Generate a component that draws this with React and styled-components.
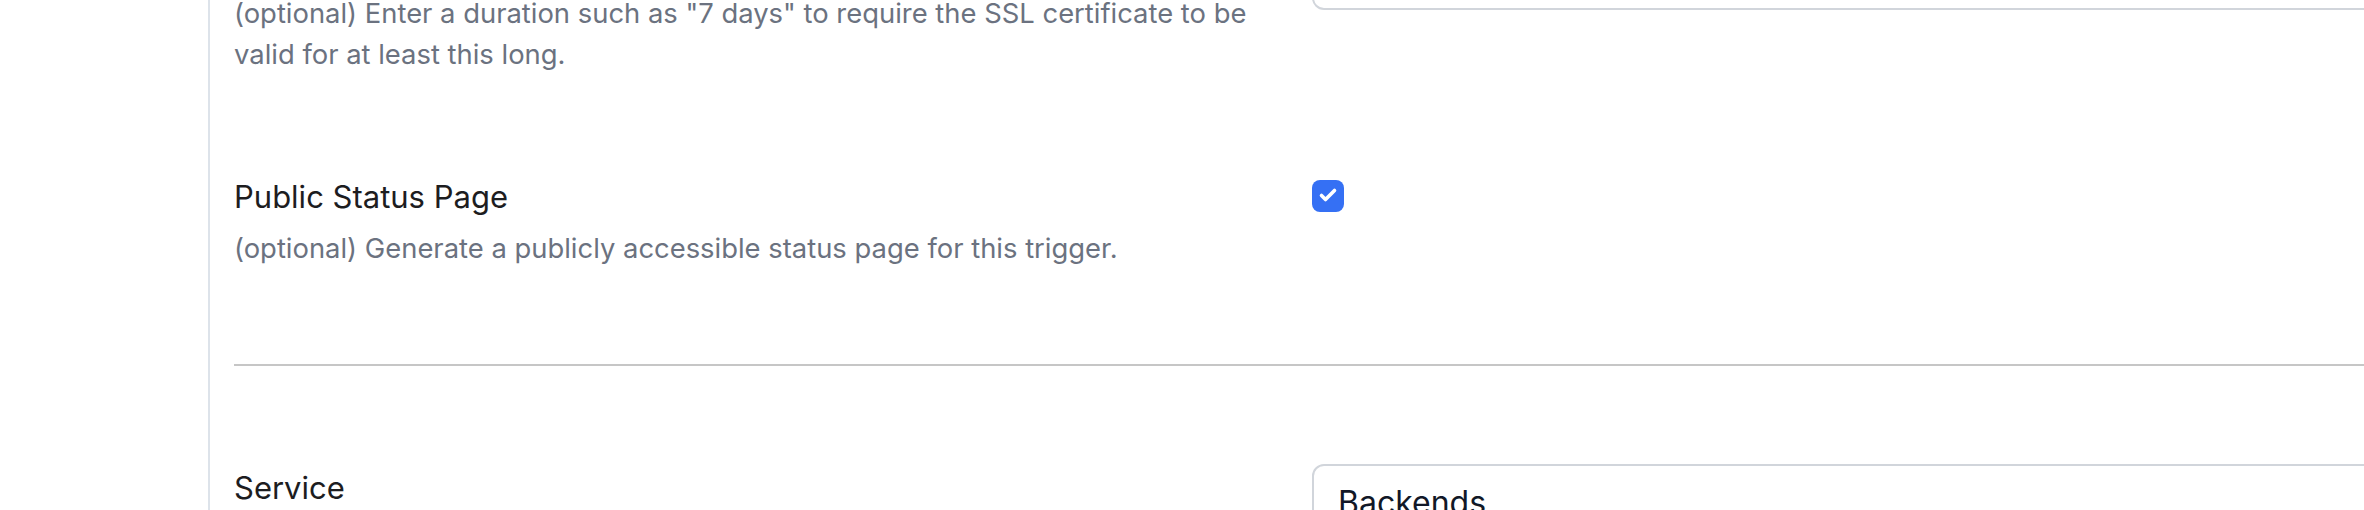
import styled, { createGlobalStyle } from "styled-components";

const GlobalStyle = createGlobalStyle`
  html, body {
    margin: 0;
    padding: 0;
    background: #ffffff;
    overflow: hidden;
  }
  body {
    font-family: Inter, "Helvetica Neue", Arial, sans-serif;
    -webkit-font-smoothing: antialiased;
  }
`;

const Layout = styled.div`
  display: flex;
  min-height: 510px;
`;

const Sidebar = styled.aside`
  flex: 0 0 208px;
  border-right: 2px solid #dde3ea;
`;

const Main = styled.main`
  flex: 0 0 2400px;
  padding-left: 24px;
  margin-top: -68px;
`;

const Row = styled.div`
  display: grid;
  grid-template-columns: 1030px 1100px;
  column-gap: 48px;
  align-items: start;
  margin-bottom: ${(p) => p.$spaceAfter || 0}px;
`;

const LabelCol = styled.div`
  display: flex;
  flex-direction: column;
  padding-top: ${(p) => p.$offset || 0}px;
`;

const Label = styled.label`
  font-size: 31px;
  line-height: 40px;
  font-weight: 400;
  color: #1d1d1f;
`;

const Help = styled.p`
  margin: ${(p) => p.$gap || 11}px 0 0;
  font-size: 27.4px;
  line-height: 41px;
  color: #6b7280;
`;

const Input = styled.div`
  box-sizing: border-box;
  width: 100%;
  border: 2px solid #d1d5db;
  border-radius: 12px;
  padding: 13px 24px;
  font-size: 32px;
  line-height: 48px;
  color: #111827;
  min-height: 78px;
`;

const CheckWrap = styled.div`
  padding-top: 3px;
`;

const Checkbox = styled.span`
  display: flex;
  align-items: center;
  justify-content: center;
  width: 32px;
  height: 32px;
  border-radius: 8px;
  background: ${(p) => (p.$checked ? "#3570f4" : "#ffffff")};
  border: ${(p) => (p.$checked ? "none" : "2px solid #d1d5db")};
`;

const Divider = styled.hr`
  border: none;
  border-top: 2px solid #c6c6c6;
  margin: 95px 0 98px;
`;

const CheckIcon = () => (
  <svg width="32" height="32" viewBox="0 0 32 32" fill="none">
    <path
      d="M9.5 15.5 L13.5 19.5 L22.5 10.5"
      stroke="#ffffff"
      strokeWidth="3.6"
      strokeLinecap="round"
      strokeLinejoin="round"
    />
  </svg>
);

const App = () => {
  return (
    <>
      <GlobalStyle />
      <Layout>
        <Sidebar />
        <Main>
          <Row $spaceAfter={102}>
            <LabelCol>
              <Label>SSL Certificate Validity</Label>
              <Help $gap={21}>
                (optional) Enter a duration such as "7 days" to require the SSL
                certificate to be valid for at least this long.
              </Help>
            </LabelCol>
            <Input />
          </Row>

          <Row>
            <LabelCol>
              <Label>Public Status Page</Label>
              <Help>
                (optional) Generate a publicly accessible status page for this
                trigger.
              </Help>
            </LabelCol>
            <CheckWrap>
              <Checkbox $checked>
                <CheckIcon />
              </Checkbox>
            </CheckWrap>
          </Row>

          <Divider />

          <Row>
            <LabelCol $offset={4}>
              <Label>Service</Label>
            </LabelCol>
            <Input>Backends</Input>
          </Row>
        </Main>
      </Layout>
    </>
  );
};

export default App;
